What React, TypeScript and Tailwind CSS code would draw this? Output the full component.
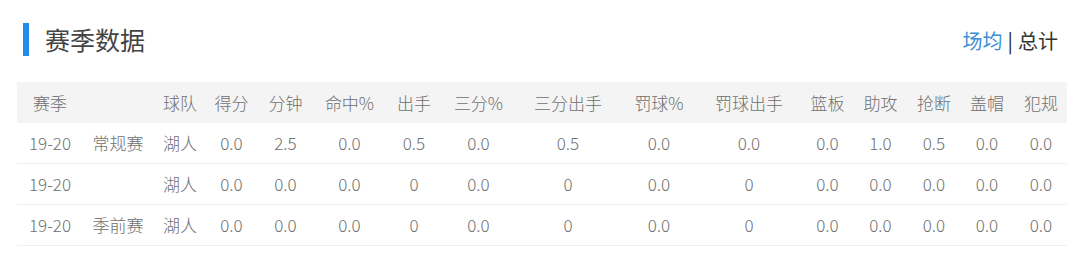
import React from "react";

const cols = "grid-cols-[66px_70px_54px_49px_59px_69px_60px_69px_110px_72px_108px_49px_57px_50px_56px_52px]";

const headers = ["赛季", "", "球队", "得分", "分钟", "命中%", "出手", "三分%", "三分出手", "罚球%", "罚球出手", "篮板", "助攻", "抢断", "盖帽", "犯规"];

const rows: string[][] = [
  ["19-20", "常规赛", "湖人", "0.0", "2.5", "0.0", "0.5", "0.0", "0.5", "0.0", "0.0", "0.0", "1.0", "0.5", "0.0", "0.0"],
  ["19-20", "", "湖人", "0.0", "0.0", "0.0", "0", "0.0", "0", "0.0", "0", "0.0", "0.0", "0.0", "0.0", "0.0"],
  ["19-20", "季前赛", "湖人", "0.0", "0.0", "0.0", "0", "0.0", "0", "0.0", "0", "0.0", "0.0", "0.0", "0.0", "0.0"],
];

export default function App() {
  return (
    <div
      className="w-[1085px] h-[256px] bg-white pt-[23px] overflow-hidden"
      style={{ fontFamily: '"Noto Sans CJK SC", "Noto Sans", sans-serif' }}
    >
      <div className="flex items-center justify-between pl-[23px] pr-[27px] h-[33px]">
        <div className="flex items-center">
          <div className="w-[6px] h-[33px] bg-[#1f8ceb]" />
          <h2 className="ml-[16px] text-[25px] leading-none text-[#444]">赛季数据</h2>
        </div>
        <div className="text-[20px] leading-none text-[#333] mt-[3px] flex items-center">
          <span className="text-[#3b8fd8]">场均</span>
          <span className="mx-[5px] text-[#222]">|</span>
          <span>总计</span>
        </div>
      </div>
      <div className="ml-[17px] mt-[26px] w-[1050px] text-[17px] font-light text-[#707070]">
        <div className={`grid ${cols} h-[41px] bg-[#f4f4f4] items-center`}>
          {headers.map((h, i) => (
            <div key={i} className="text-center whitespace-nowrap">{h}</div>
          ))}
        </div>
        {rows.map((r, ri) => (
          <div key={ri} className={`grid ${cols} h-[41px] items-center border-b border-[#f0f0f0]`}>
            {r.map((c, ci) => (
              <div key={ci} className="text-center whitespace-nowrap">{c}</div>
            ))}
          </div>
        ))}
      </div>
    </div>
  );
}
